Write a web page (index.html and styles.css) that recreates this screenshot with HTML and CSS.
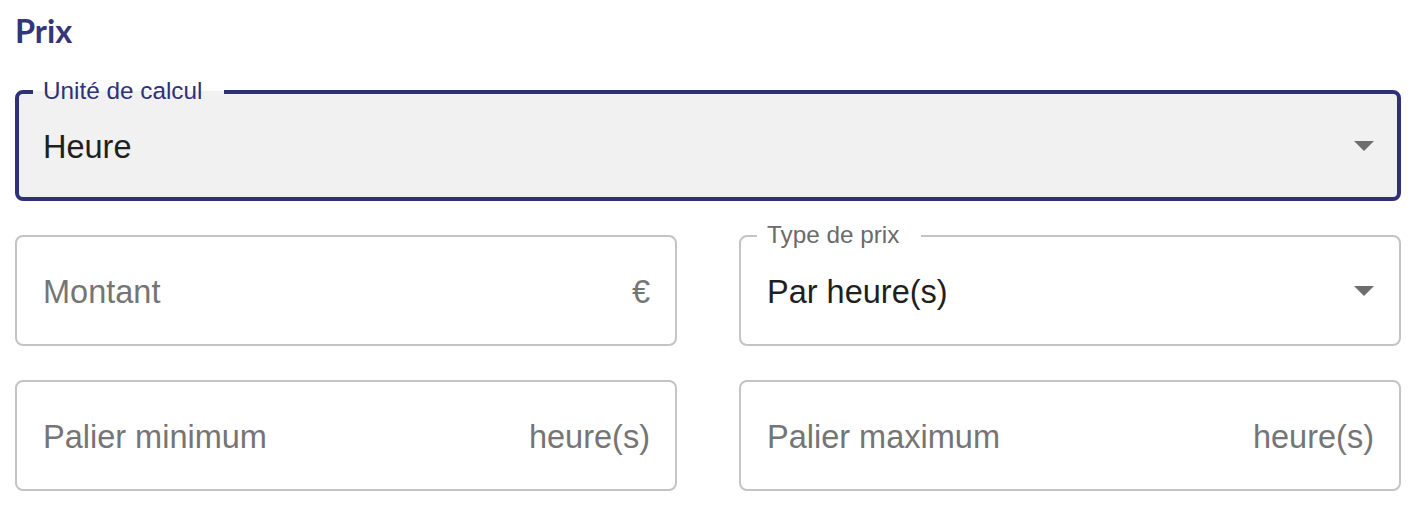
FILE: index.html
```html
<!DOCTYPE html>
<html lang="fr">
<head>
<meta charset="utf-8">
<title>Prix</title>
<link rel="stylesheet" href="styles.css">
</head>
<body>
<div class="page">
  <h2 class="title">Prix</h2>
  <div class="grid">
    <div class="field field--focused span-2">
      <span class="label label--focused">Unité de calcul</span>
      <span class="value">Heure</span>
      <svg class="arrow" viewBox="7 10 10 5" aria-hidden="true"><path d="M7 10l5 5 5-5z"/></svg>
    </div>
    <div class="field">
      <span class="placeholder">Montant</span>
      <span class="adorn">€</span>
    </div>
    <div class="field">
      <span class="label">Type de prix</span>
      <span class="value">Par heure(s)</span>
      <svg class="arrow" viewBox="7 10 10 5" aria-hidden="true"><path d="M7 10l5 5 5-5z"/></svg>
    </div>
    <div class="field">
      <span class="placeholder">Palier minimum</span>
      <span class="adorn">heure(s)</span>
    </div>
    <div class="field">
      <span class="placeholder">Palier maximum</span>
      <span class="adorn">heure(s)</span>
    </div>
  </div>
</div>
</body>
</html>
```

FILE: styles.css
```css
html, body {
  margin: 0;
  padding: 0;
  background: #ffffff;
}

.page {
  padding: 11px 23px 0 15px;
  font-family: "Liberation Sans", Arial, sans-serif;
}

.title {
  margin: 0;
  font-family: Lato, "Liberation Sans", sans-serif;
  font-weight: 700;
  font-size: 32.5px;
  line-height: 40px;
  color: #34357a;
}

.grid {
  margin-top: 39px;
  display: grid;
  grid-template-columns: 1fr 1fr;
  column-gap: 62px;
  row-gap: 34px;
}

.span-2 {
  grid-column: 1 / span 2;
}

.field {
  position: relative;
  box-sizing: border-box;
  height: 111px;
  display: flex;
  align-items: center;
  padding: 3px 25px 0 26px;
  border: 2px solid #c4c4c4;
  border-radius: 8px;
  background: #ffffff;
  font-size: 32.5px;
}

.field--focused {
  border: 4px solid #2f3178;
  padding: 3px 23px 0 24px;
  background: #f1f1f1;
}

.label {
  position: absolute;
  left: 16px;
  top: -14px;
  padding: 0 22px 0 10px;
  font-size: 24.3px;
  line-height: 24px;
  color: #6b6b6b;
  background: #ffffff;
}

.label--focused {
  left: 14px;
  top: -15px;
  color: #2f3178;
  background: linear-gradient(to bottom, #ffffff 0, #ffffff 12px, #f1f1f1 12px);
}

.value {
  color: #1f1f1f;
}

.placeholder {
  color: #757575;
}

.adorn {
  margin-left: auto;
  color: #757575;
}

.arrow {
  margin-left: auto;
  margin-bottom: 3px;
  width: 20px;
  height: 10px;
  fill: #6e6e6e;
}
```
